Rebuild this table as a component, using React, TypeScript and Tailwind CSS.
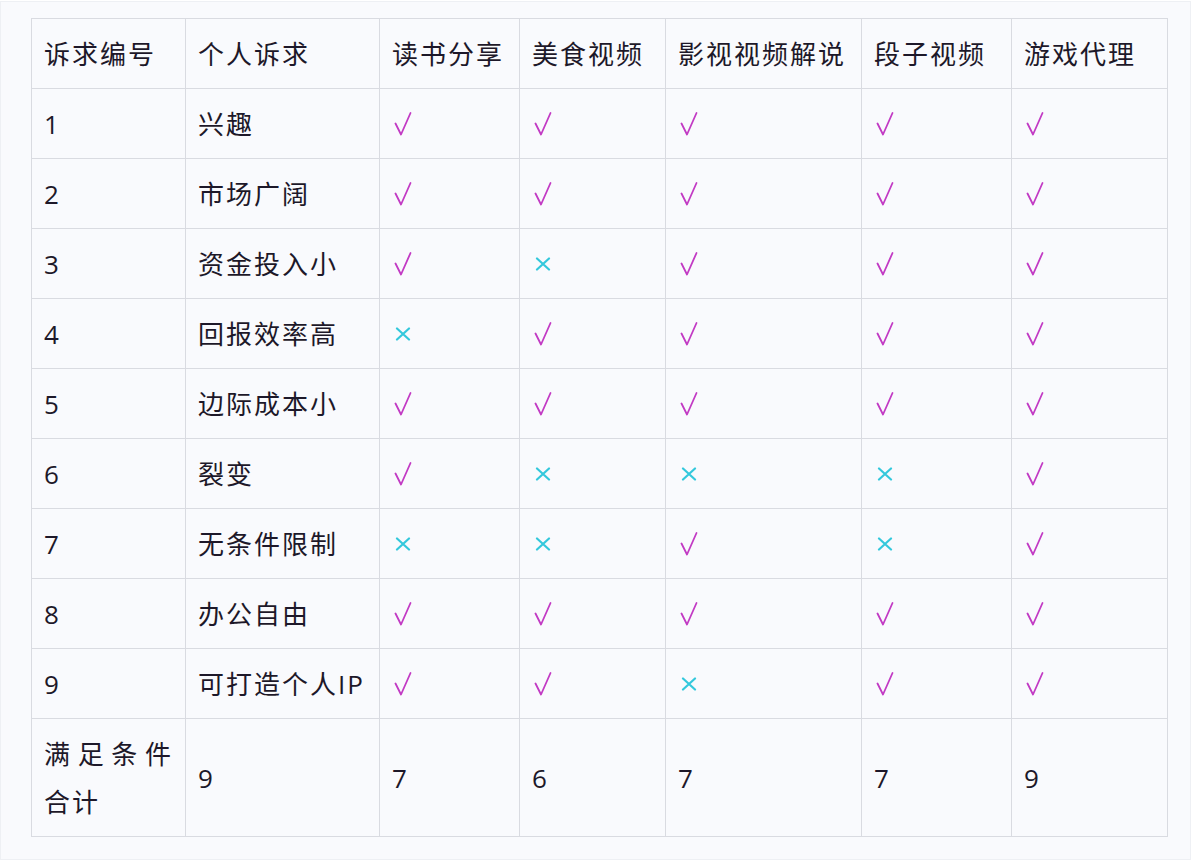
import React from "react";

const headers = ["诉求编号", "个人诉求", "读书分享", "美食视频", "影视视频解说", "段子视频", "游戏代理"];
const widths = [154, 194, 140, 146, 196, 150, 156];

const rows: [string, string, string][] = [
  ["1", "兴趣", "YYYYY"],
  ["2", "市场广阔", "YYYYY"],
  ["3", "资金投入小", "YNYYY"],
  ["4", "回报效率高", "NYYYY"],
  ["5", "边际成本小", "YYYYY"],
  ["6", "裂变", "YNNNY"],
  ["7", "无条件限制", "NNYNY"],
  ["8", "办公自由", "YYYYY"],
  ["9", "可打造个人IP", "YYNYY"],
];

function Mark({ v }: { v: string }) {
  if (v === "Y") {
    return (
      <svg width="18" height="24" viewBox="0 0 18 24" className="block ml-[2px] mt-[1px]">
        <path d="M1.5 11.5 L7 22.5 L16.5 1" fill="none" stroke="#c23ac4" strokeWidth="1.8" strokeLinecap="round" strokeLinejoin="round" />
      </svg>
    );
  }
  return (
    <svg width="16" height="14" viewBox="0 0 16 14" className="block ml-[3px] mt-[1px]">
      <path d="M2 1.5 L14 12.5 M14 1.5 L2 12.5" fill="none" stroke="#33c8dc" strokeWidth="2.2" strokeLinecap="round" />
    </svg>
  );
}

const cell = "border border-[#d9dbe1] px-[12px] py-0 align-middle text-justify";

export default function App() {
  return (
    <div className="w-[1194px] h-[862px] bg-white" style={{ fontFamily: '"Open Sans", "Noto Sans CJK SC", sans-serif' }}>
      <div className="ml-0 mt-px w-[1191px] h-[859px] bg-[#f9fafd] border border-[#eef0f4] pt-[16px] pl-[30px]">
        <table className="table-fixed border-collapse text-[26px] leading-[48px] tracking-[2px] text-[#1d1829]" style={{ width: 1136 }}>
          <colgroup>
            {widths.map((w, i) => (
              <col key={i} style={{ width: w }} />
            ))}
          </colgroup>
          <tbody>
            <tr className="h-[70px]">
              {headers.map((h) => (
                <td key={h} className={cell}>
                  {h}
                </td>
              ))}
            </tr>
            {rows.map(([n, name, marks]) => (
              <tr key={n} className="h-[70px]">
                <td className={cell}>{n}</td>
                <td className={cell}>{name}</td>
                {marks.split("").map((m, i) => (
                  <td key={i} className={cell}>
                    <Mark v={m} />
                  </td>
                ))}
              </tr>
            ))}
            <tr className="h-[118px]">
              <td className={cell}>满足条件合计</td>
              <td className={cell}>9</td>
              <td className={cell}>7</td>
              <td className={cell}>6</td>
              <td className={cell}>7</td>
              <td className={cell}>7</td>
              <td className={cell}>9</td>
            </tr>
          </tbody>
        </table>
      </div>
    </div>
  );
}
